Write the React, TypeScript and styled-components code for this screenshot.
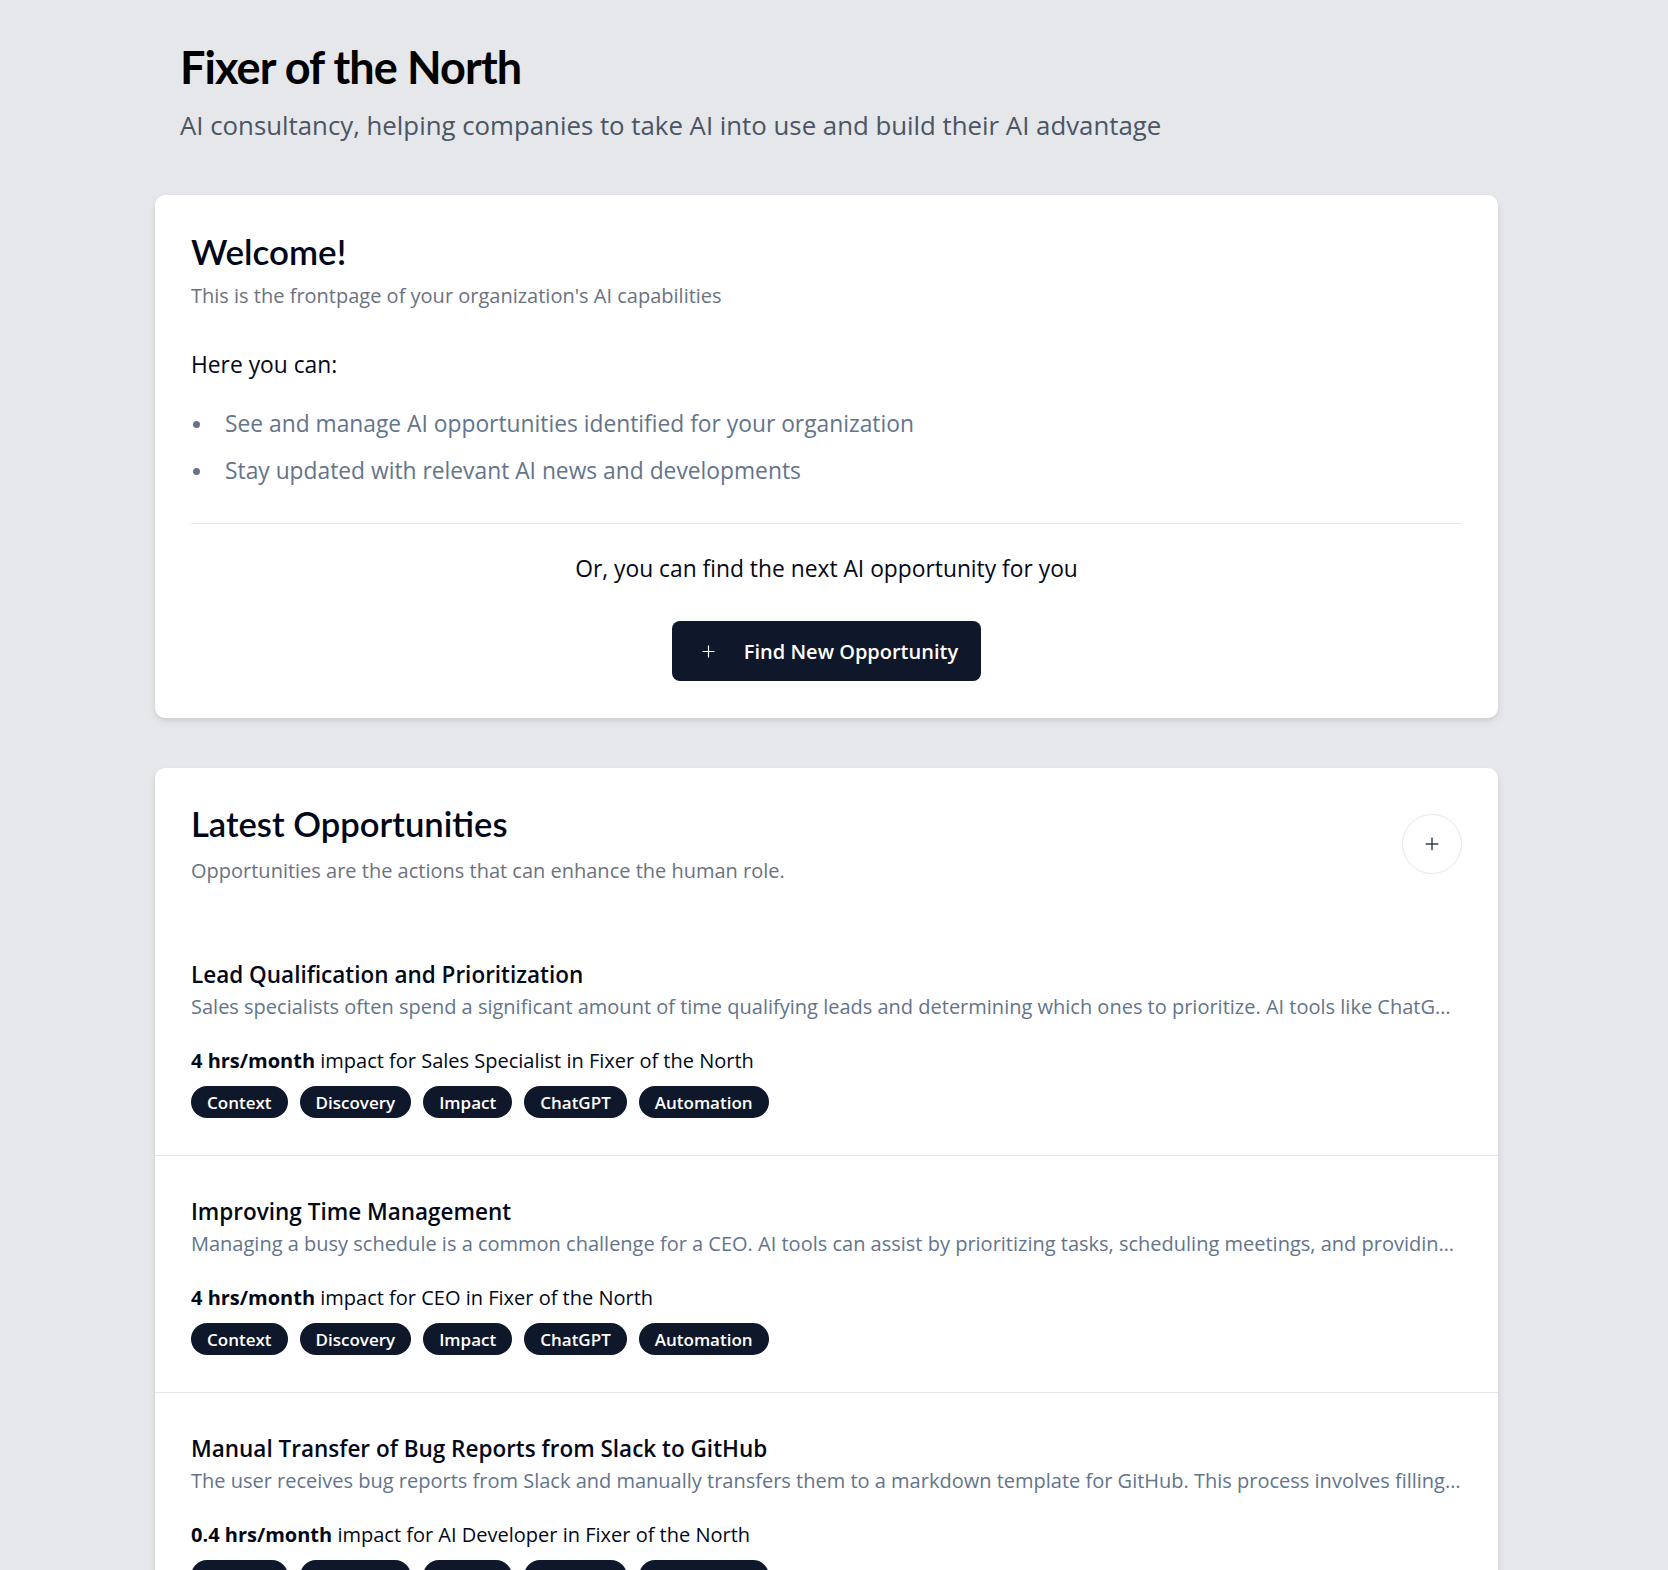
import React from "react";
import styled, { createGlobalStyle } from "styled-components";
import { Plus } from "lucide-react";

const GlobalStyle = createGlobalStyle`
  * { box-sizing: border-box; }
  html, body { margin: 0; padding: 0; }
  body {
    background: #e5e7eb;
    font-family: "Open Sans", "Noto Sans", sans-serif;
    color: #020817;
    height: 1570px;
    overflow: hidden;
  }
`;

const headingFont = `Lato, "Open Sans", sans-serif`;

const Page = styled.main`
  padding: 40px 170px 0 155px;
  display: flex;
  flex-direction: column;
`;

const Header = styled.header`
  padding-left: 25px;
  margin-bottom: 54px;
`;

const BrandTitle = styled.h1`
  margin: 0;
  font-family: ${headingFont};
  font-size: 45px;
  line-height: 55px;
  font-weight: 700;
  letter-spacing: -0.02em;
  color: #000;
`;

const BrandSub = styled.p`
  margin: 14px 0 0;
  font-size: 25.8px;
  line-height: 32px;
  color: #4b5563;
`;

const Card = styled.section<{ $flush?: boolean }>`
  background: #fff;
  border-radius: 10px;
  box-shadow: 0 2px 4px rgba(0, 0, 0, 0.06), 0 4px 8px rgba(0, 0, 0, 0.06);
  padding: ${(p) => (p.$flush ? "0" : "34px 36px 37px")};
  margin-bottom: 50px;
`;

const CardTitle = styled.h2<{ $size?: number }>`
  margin: 0;
  font-family: ${headingFont};
  font-size: ${(p) => p.$size ?? 35}px;
  line-height: 44px;
  font-weight: 600;
  color: #020817;
`;

const CardSub = styled.p<{ $size?: number; $gap?: number }>`
  margin: ${(p) => p.$gap ?? 9}px 0 0;
  font-size: ${(p) => p.$size ?? 20}px;
  line-height: 28px;
  color: #6b7280;
`;

const Lead = styled.p<{ $center?: boolean; $gap: number }>`
  margin: ${(p) => p.$gap}px 0 0;
  font-size: 22.8px;
  line-height: 30px;
  text-align: ${(p) => (p.$center ? "center" : "left")};
  color: #020817;
`;

const List = styled.ul`
  list-style: none;
  margin: 28px 0 0;
  padding: 0;
  display: flex;
  flex-direction: column;
  gap: 15px;
`;

const ListItem = styled.li`
  display: flex;
  align-items: center;
  gap: 25px;
  padding-left: 2px;
  font-size: 22.8px;
  line-height: 32px;
  color: #64748b;

  &::before {
    content: "";
    width: 7px;
    height: 7px;
    border-radius: 50%;
    background: #64748b;
    flex: none;
  }
`;

const Divider = styled.hr`
  margin: 36px 0 0;
  border: none;
  border-top: 1px solid #e5e7eb;
`;

const CenterRow = styled.div`
  display: flex;
  justify-content: center;
`;

const PrimaryButton = styled.button`
  margin-top: 37px;
  height: 60px;
  padding: 0 23px 0 27px;
  display: flex;
  align-items: center;
  gap: 26px;
  background: #0f172a;
  color: #fff;
  border: none;
  border-radius: 8px;
  font-family: inherit;
  font-size: 20px;
  font-weight: 600;
  cursor: pointer;
`;

const SectionHead = styled.div`
  display: flex;
  align-items: center;
  justify-content: space-between;
  padding: 34px 36px 34px;
`;

const RoundButton = styled.button`
  width: 60px;
  height: 60px;
  border-radius: 50%;
  border: 1px solid #e2e8f0;
  background: #fff;
  color: #334155;
  display: flex;
  align-items: center;
  justify-content: center;
  padding: 0;
  cursor: pointer;
`;

const Opportunity = styled.article`
  padding: 40px 36px 37px;
  & + & {
    border-top: 1px solid #e5e7eb;
  }
`;

const OppTitle = styled.h3`
  margin: 0;
  font-size: 22.5px;
  line-height: 32px;
  font-weight: 600;
  color: #020817;
`;

const OppDesc = styled.p`
  margin: 2px 0 0;
  font-size: 20px;
  line-height: 28px;
  color: #64748b;
  white-space: nowrap;
  overflow: hidden;
  text-overflow: ellipsis;
`;

const Impact = styled.p`
  margin: 26px 0 0;
  font-size: 20px;
  line-height: 28px;
  color: #020817;

  strong {
    font-weight: 700;
  }
`;

const Tags = styled.div`
  margin-top: 11px;
  display: flex;
  gap: 12px;
`;

const Tag = styled.span`
  height: 32px;
  padding: 0 16px;
  display: inline-flex;
  align-items: center;
  border-radius: 16px;
  background: #0f172a;
  color: #fff;
  font-size: 17px;
  font-weight: 600;
`;

const tags = ["Context", "Discovery", "Impact", "ChatGPT", "Automation"];

const opportunities = [
  {
    title: "Lead Qualification and Prioritization",
    desc: "Sales specialists often spend a significant amount of time qualifying leads and determining which ones to prioritize. AI tools like ChatGPT can analyze lead data and rank prospects by their likelihood to convert.",
    hours: "4",
    role: "Sales Specialist",
  },
  {
    title: "Improving Time Management",
    desc: "Managing a busy schedule is a common challenge for a CEO. AI tools can assist by prioritizing tasks, scheduling meetings, and providing reminders for important deadlines.",
    hours: "4",
    role: "CEO",
  },
  {
    title: "Manual Transfer of Bug Reports from Slack to GitHub",
    desc: "The user receives bug reports from Slack and manually transfers them to a markdown template for GitHub. This process involves filling in the template by hand.",
    hours: "0.4",
    role: "AI Developer",
  },
];

export default function App() {
  return (
    <>
      <GlobalStyle />
      <Page>
        <Header>
          <BrandTitle>Fixer of the North</BrandTitle>
          <BrandSub>AI consultancy, helping companies to take AI into use and build their AI advantage</BrandSub>
        </Header>

        <Card>
          <CardTitle>Welcome!</CardTitle>
          <CardSub>This is the frontpage of your organization's AI capabilities</CardSub>
          <Lead $gap={40}>Here you can:</Lead>
          <List>
            <ListItem>See and manage AI opportunities identified for your organization</ListItem>
            <ListItem>Stay updated with relevant AI news and developments</ListItem>
          </List>
          <Divider />
          <Lead $center $gap={30}>
            Or, you can find the next AI opportunity for you
          </Lead>
          <CenterRow>
            <PrimaryButton>
              <Plus size={19} strokeWidth={1.5} />
              Find New Opportunity
            </PrimaryButton>
          </CenterRow>
        </Card>

        <Card $flush>
          <SectionHead>
            <div>
              <CardTitle $size={34.6}>Latest Opportunities</CardTitle>
              <CardSub $gap={11}>Opportunities are the actions that can enhance the human role.</CardSub>
            </div>
            <RoundButton aria-label="Add opportunity">
              <Plus size={20} strokeWidth={1.75} />
            </RoundButton>
          </SectionHead>
          {opportunities.map((o) => (
            <Opportunity key={o.title}>
              <OppTitle>{o.title}</OppTitle>
              <OppDesc>{o.desc}</OppDesc>
              <Impact>
                <strong>{o.hours} hrs/month</strong> impact for {o.role} in Fixer of the North
              </Impact>
              <Tags>
                {tags.map((t) => (
                  <Tag key={t}>{t}</Tag>
                ))}
              </Tags>
            </Opportunity>
          ))}
        </Card>
      </Page>
    </>
  );
}
